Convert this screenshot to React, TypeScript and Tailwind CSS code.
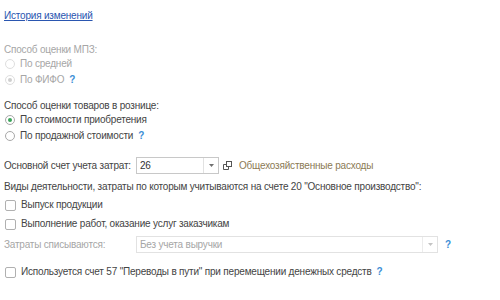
import React from "react";

const Q = () => <span className="ml-[5px] font-bold text-[#3c8ed6]">?</span>;

const Radio = ({ checked, disabled, label, q }: { checked?: boolean; disabled?: boolean; label: string; q?: boolean }) => (
  <div className="flex h-[16px] items-center whitespace-nowrap">
    <span className={`ml-[1px] flex h-[10px] w-[10px] items-center justify-center rounded-full border ${disabled ? "border-[#dedede]" : "border-[#a8a8a8]"} bg-white`}>
      {checked && <span className={`h-[4px] w-[4px] rounded-full ${disabled ? "bg-[#cfcfcf]" : "bg-[#3aa55a]"}`} />}
    </span>
    <span className={`ml-[5px] ${disabled ? "text-[#a6a6a6]" : "text-[#444]"}`}>{label}</span>
    {q && <Q />}
  </div>
);

const Check = ({ label, q }: { label: string; q?: boolean }) => (
  <div className="flex h-[16px] items-center whitespace-nowrap">
    <span className="ml-[1px] h-[11px] w-[11px] rounded-[2px] border border-[#b0b0b0] bg-white" />
    <span className="ml-[5px] text-[#444]">{label}</span>
    {q && <Q />}
  </div>
);

export default function App() {
  return (
    <div className="h-[300px] w-[500px] bg-white pl-[4px] text-[10px] leading-[12px] tracking-[-0.2px]" style={{ fontFamily: '"Liberation Sans", Arial, sans-serif' }}>
      <div className="mt-[9px] flex h-[14px] items-center">
        <a className="text-[#2a56b0] underline">История изменений</a>
      </div>
      <div className="mt-[21px] flex h-[12px] items-center text-[#a6a6a6]">Способ оценки МПЗ:</div>
      <Radio disabled label="По средней" />
      <Radio disabled checked label="По ФИФО" q />
      <div className="mt-[11px] flex h-[13px] items-center text-[#444]">Способ оценки товаров в рознице:</div>
      <Radio checked label="По стоимости приобретения" />
      <Radio label="По продажной стоимости" q />
      <div className="mt-[13px] flex h-[17px] items-center whitespace-nowrap">
        <span className="w-[132px] text-[#444]">Основной счет учета затрат:</span>
        <div className="flex h-[17px] w-[83px] items-center border border-[#c8c8c8] bg-white">
          <span className="flex-1 pl-[3px] text-[#333]">26</span>
          <span className="flex h-full w-[15px] items-center justify-center border-l border-[#e2e2e2]">
            <svg width="5" height="3" viewBox="0 0 5 3"><path d="M0 0h5L2.5 3z" fill="#707070" /></svg>
          </span>
        </div>
        <span className="ml-[3px] flex h-[17px] w-[10px] items-center justify-center">
          <svg width="9" height="9" viewBox="0 0 9 9" fill="none" stroke="#555" strokeWidth="1">
            <rect x="3.5" y="0.5" width="5" height="5" />
            <path d="M3.5 3.5H0.5V8.5H5.5V5.5" />
          </svg>
        </span>
        <span className="ml-[7px] text-[#8b7a55]">Общехозяйственные расходы</span>
      </div>
      <div className="mt-[7px] flex h-[12px] items-center whitespace-nowrap text-[#444]">Виды деятельности, затраты по которым учитываются на счете 20 "Основное производство":</div>
      <div className="mt-[4px]">
        <Check label="Выпуск продукции" />
      </div>
      <div className="mt-[3px]">
        <Check label="Выполнение работ, оказание услуг заказчикам" />
      </div>
      <div className="mt-[4px] flex h-[17px] items-center whitespace-nowrap">
        <span className="w-[132px] text-[#a6a6a6]">Затраты списываются:</span>
        <div className="flex h-[17px] w-[302px] items-center border border-[#e2e2e2] bg-white">
          <span className="flex-1 pl-[3px] text-[#a6a6a6]">Без учета выручки</span>
          <span className="flex h-full w-[15px] items-center justify-center border-l border-[#ececec]">
            <svg width="5" height="3" viewBox="0 0 5 3"><path d="M0 0h5L2.5 3z" fill="#c4c4c4" /></svg>
          </span>
        </div>
        <span className="ml-[2px]"><Q /></span>
      </div>
      <div className="mt-[11px]">
        <Check label='Используется счет 57 "Переводы в пути" при перемещении денежных средств' q />
      </div>
    </div>
  );
}
